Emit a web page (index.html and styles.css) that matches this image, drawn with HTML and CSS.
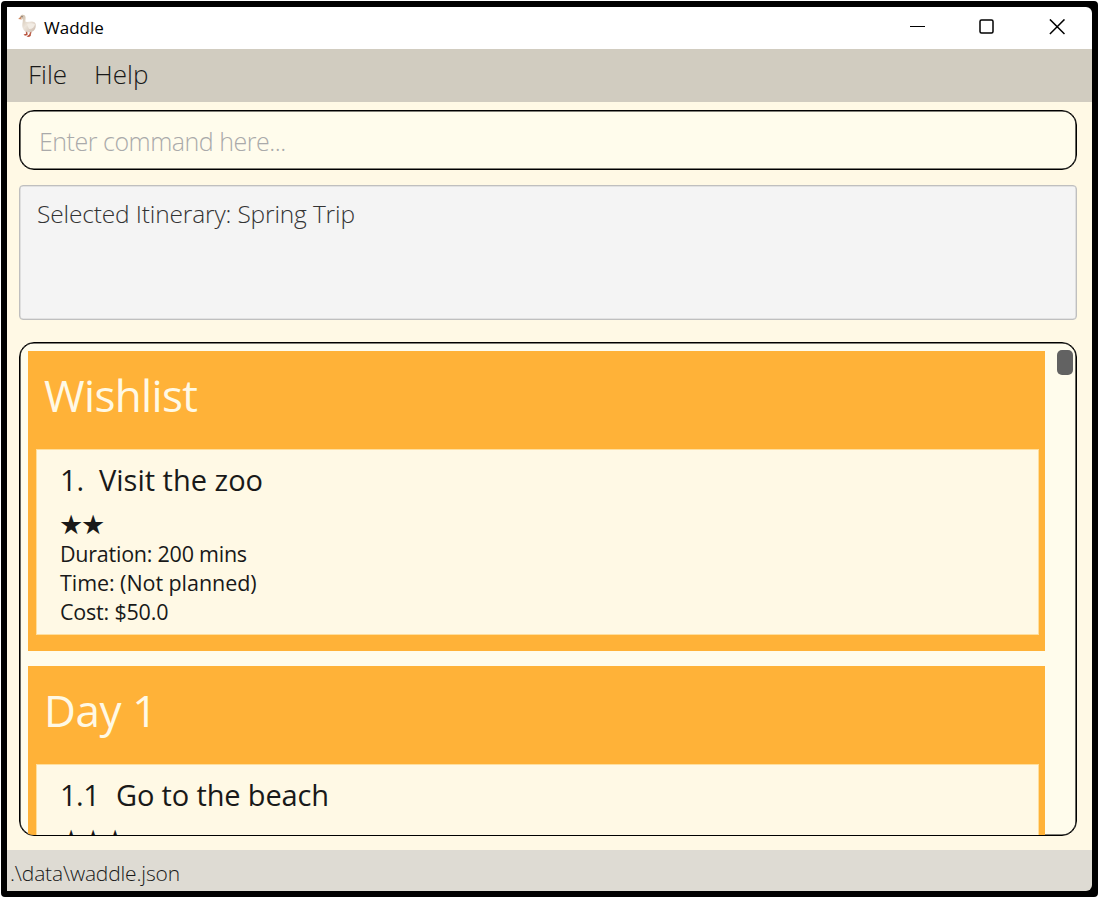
FILE: index.html
```html
<!DOCTYPE html>
<html lang="en">
<head>
<meta charset="utf-8">
<title>Waddle</title>
<link rel="stylesheet" href="styles.css">
</head>
<body>
<div class="window">
  <header class="titlebar">
    <svg class="logo" width="20" height="24" viewBox="0 0 20 24">
      <defs>
        <linearGradient id="plumage" x1="0" y1="0" x2="1" y2="1">
          <stop offset="0" stop-color="#c9b8a4"/>
          <stop offset=".5" stop-color="#ece4da"/>
          <stop offset="1" stop-color="#cbb9ab"/>
        </linearGradient>
      </defs>
      <path d="M8.500 17l.3 3.200M13 17l-1 4.200" fill="none" stroke="#b9604a" stroke-width="1.500"/>
      <path d="M5.500 20.500l3.600-1 .6 1.600-2.700.6zM8.500 22.600l3.300-2.300 1.200 1.400-2 1.200z" fill="#b9523d"/>
      <path d="M2.200 2.700C3 .2 7 0 7.600 3.300c.3 1.800-.5 3.500 0 4.500 2.500.6 5-.9 7.500 0 2.300.7 2.900 1.800 2.700 4.200-.2 3.700-2.500 6.300-6.600 6.300C7 18.300 4.400 15.500 4.300 11.500c0-2.500.8-4 .4-6.300z" fill="url(#plumage)"/>
      <path d="M9 10.500c2-1.300 5-1.500 8-.5-.5 3-2.500 5-6 5" fill="#f2ece4"/>
      <path d="M2.700 2.500L.2 5l3.600.4z" fill="#cf8b62"/>
      <circle cx="4" cy="2.700" r=".6" fill="#5b4a42"/>
    </svg>
    <span class="app-name">Waddle</span>
    <div class="controls">
      <svg width="16" height="16" viewBox="0 0 16 16"><path class="minimize" d="M1 7.500h15"/></svg>
      <svg width="16" height="16" viewBox="0 0 16 16"><rect x="1" y="1" width="13" height="13" rx="1.500"/></svg>
      <svg width="16" height="16" viewBox="0 0 16 16"><path d="M.9.400l14.600 14.600M15.500.400L.9 15"/></svg>
    </div>
  </header>
  <nav class="menubar"><span class="menu-file">File</span><span class="menu-help">Help</span></nav>
  <main class="content">
    <div class="command"><span>Enter command here...</span></div>
    <div class="result"><span>Selected Itinerary: Spring Trip</span></div>
    <div class="list">
      <div class="groups">
        <section class="group">
          <h2 class="wishlist">Wishlist</h2>
          <article class="item">
            <h3><span class="index">1.</span><span class="visit">Visit the zoo</span></h3>
            <div class="stars">★★</div>
            <p class="duration">Duration: 200 mins</p>
            <p class="time">Time: (Not planned)</p>
            <p class="cost">Cost: $50.0</p>
          </article>
        </section>
        <section class="group">
          <h2 class="day">Day 1</h2>
          <article class="item">
            <h3><span class="index day-index">1.1</span><span class="beach">Go to the beach</span></h3>
            <div class="stars">★★★</div>
          </article>
        </section>
      </div>
      <div class="scroll-thumb"></div>
    </div>
  </main>
  <footer class="status"><span>.\data\waddle.json</span></footer>
</div>
</body>
</html>
```
FILE: styles.css
```css
* { box-sizing: border-box; }
body {
  margin: 0;
  height: 898px;
  padding: 1px;
  background: #fff;
  overflow: hidden;
  font-family: "Open Sans", "Noto Sans", sans-serif;
  color: #191919;
}
.window {
  width: 1097px;
  height: 896px;
  border: 6px solid #000;
  border-radius: 4px;
  background: linear-gradient(#000, #000) right top / 8px 8px no-repeat, linear-gradient(#000, #000) right bottom / 8px 8px no-repeat, #fff9e5;
  display: flex;
  flex-direction: column;
}
.titlebar {
  height: 42px;
  flex: none;
  display: flex;
  align-items: center;
  padding: 0 27px 2px 11px;
  background: #fff;
  border-top-right-radius: 6px;
}
.logo { flex: none; margin-top: -2px; }
.app-name { margin-left: 6px; font-size: 17px; color: #000; }
.controls { margin-left: auto; display: flex; gap: 54px; }
.controls svg { fill: none; stroke: #000; stroke-width: 1.500; }
.controls .minimize { stroke-width: 1; }
.menubar {
  height: 53px;
  flex: none;
  display: flex;
  align-items: center;
  gap: 27px;
  padding: 0 0 3px 21px;
  background: #d1ccc0;
  font-size: 26px;
  font-weight: 300;
}
.content {
  flex: 1;
  display: flex;
  flex-direction: column;
  padding: 8px 15px 14px 12px;
}
.command {
  height: 60px;
  flex: none;
  border: 1px solid #000;
  border-radius: 15px;
  box-shadow: inset 0 0 0 .6px #000;
  background: #fffcec;
  padding: 0 19px;
  font-size: 25px;
  font-weight: 300;
  letter-spacing: -.48px;
  line-height: 60px;
  color: #aaa;
}
.result {
  height: 135px;
  flex: none;
  margin-top: 15px;
  border: 1px solid #bfbfbf;
  border-radius: 4px;
  box-shadow: inset 0 0 0 .6px #d0d0d0;
  background: #f4f4f4;
  padding: 11px 17px;
  font-size: 24.500px;
  letter-spacing: -.15px;
  line-height: 34px;
  font-weight: 300;
  color: #333;
}
.list {
  height: 494px;
  flex: none;
  margin-top: 22px;
  border: 1px solid #000;
  border-radius: 15px;
  box-shadow: inset 0 0 0 .6px #000;
  background: #fffcec;
  padding: 8px 3px 0 8px;
  display: flex;
  justify-content: space-between;
  overflow: hidden;
}
.groups { width: 1017px; display: flex; flex-direction: column; gap: 15px; }
.group { height: 300px; flex: none; background: #ffb238; padding: 0 6px 16px 8px; }
h2 {
  margin: 0 0 0 8px;
  height: 98px;
  line-height: 89px;
  font-size: 44px;
  font-weight: 400;
  color: #fff9e5;
}
.wishlist { letter-spacing: -.65px; }
.day { letter-spacing: -.4px; }
.item {
  height: 186px;
  border: 1px solid #ffdf9d;
  background: #fff9e5;
  padding: 9px 23px;
}
h3 { margin: 0; height: 45px; line-height: 42px; font-size: 29px; font-weight: 400; display: flex; }
.index { width: 39px; }
.day-index { width: 56px; letter-spacing: -.5px; }
.beach { letter-spacing: -.15px; }
.stars {
  height: 40px;
  line-height: 42px;
  margin: 0 0 -5px -1px;
  font-family: "DejaVu Sans", sans-serif;
  font-size: 27px;
  letter-spacing: -2.150px;
}
p { margin: 0; font-size: 21.500px; line-height: 29px; }
.duration { letter-spacing: -.24px; }
.time { letter-spacing: -.06px; }
.cost { letter-spacing: -.2px; }
.scroll-thumb { width: 16px; height: 25px; margin-top: -1px; border-radius: 5px; background: #626262; }
.status {
  height: 41px;
  flex: none;
  background: #dedbd3;
  padding: 3px 0 0 3px;
  font-size: 21px;
  letter-spacing: -.17px;
  line-height: 41px;
  font-weight: 300;
  border-bottom-right-radius: 6px;
}
```
